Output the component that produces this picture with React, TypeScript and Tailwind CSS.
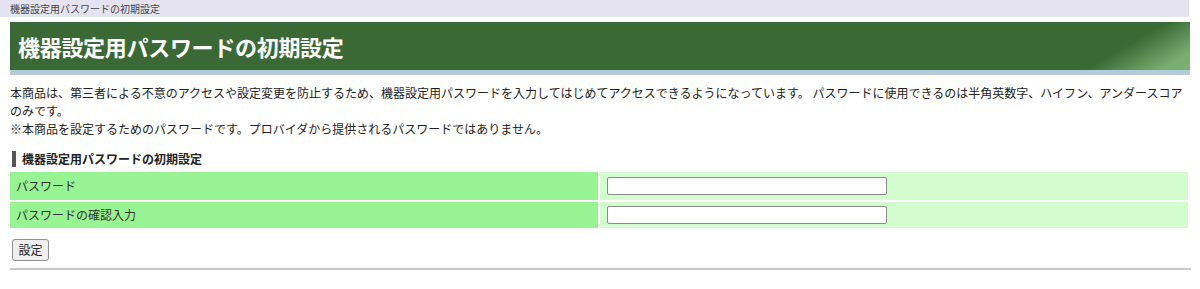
const App = () => {
  return (
    <div className="w-[1200px] h-[289px] bg-white text-[#222] font-['Noto_Sans_CJK_JP','Noto_Sans',sans-serif] overflow-hidden">
      <div className="mr-[11px] h-[17px] bg-[#e5e3f0] pl-[10px] text-[10px] leading-[17px] text-[#444]">
        機器設定用パスワードの初期設定
      </div>

      <div className="mx-[10px] mt-[5px]">
        <div className="relative h-[48px] bg-[#3a6935] overflow-hidden flex items-center pl-[8px]">
          <div className="absolute right-0 top-0 h-full w-[110px] bg-[linear-gradient(150deg,rgba(58,105,53,0)_45%,#7bae72_85%)]" />
          <h1 className="relative text-white font-bold text-[22px] leading-none tracking-[-0.3px]">
            機器設定用パスワードの初期設定
          </h1>
        </div>
        <div className="h-[5px] bg-[#b3cad8]" />
      </div>

      <div className="mx-[10px] mt-[9px] text-[12px] leading-[18px]">
        <p>
          本商品は、第三者による不意のアクセスや設定変更を防止するため、機器設定用パスワードを入力してはじめてアクセスできるようになっています。 パスワードに使用できるのは半角英数字、ハイフン、アンダースコアのみです。
        </p>
        <p>※本商品を設定するためのパスワードです。プロバイダから提供されるパスワードではありません。</p>
      </div>

      <div className="mx-[10px] mt-[12px]">
        <div className="flex items-center h-[17px] pl-[2px]">
          <span className="w-[4px] h-[16px] bg-[#555]" />
          <span className="ml-[6px] font-bold text-[12px]">機器設定用パスワードの初期設定</span>
        </div>

        <div className="mt-[5px] mr-[2px] flex flex-col gap-[2px] text-[12px] text-[#333]">
          <div className="flex gap-[2px] h-[28px]">
            <div className="w-[588px] bg-[#98f392] flex items-center pl-[6px]">パスワード</div>
            <div className="flex-1 bg-[#d3fdcf] flex items-center pl-[7px]">
              <input type="password" className="w-[280px] h-[18px] bg-white border border-[#8a8a8a] rounded-[2px]" />
            </div>
          </div>
          <div className="flex gap-[2px] h-[26px]">
            <div className="w-[588px] bg-[#98f392] flex items-center pl-[6px]">パスワードの確認入力</div>
            <div className="flex-1 bg-[#d3fdcf] flex items-center pl-[7px]">
              <input type="password" className="w-[280px] h-[18px] bg-white border border-[#8a8a8a] rounded-[2px]" />
            </div>
          </div>
        </div>

        <button className="mt-[11px] ml-[2px] w-[37px] h-[22px] bg-[#efefef] border border-[#8f8f8f] rounded-[3px] text-[12px] text-[#222] leading-none">
          設定
        </button>

        <div className="mt-[7px] mr-[-1px] h-[2px] bg-[#c8c8c8]" />
      </div>
    </div>
  );
};

export default App;
